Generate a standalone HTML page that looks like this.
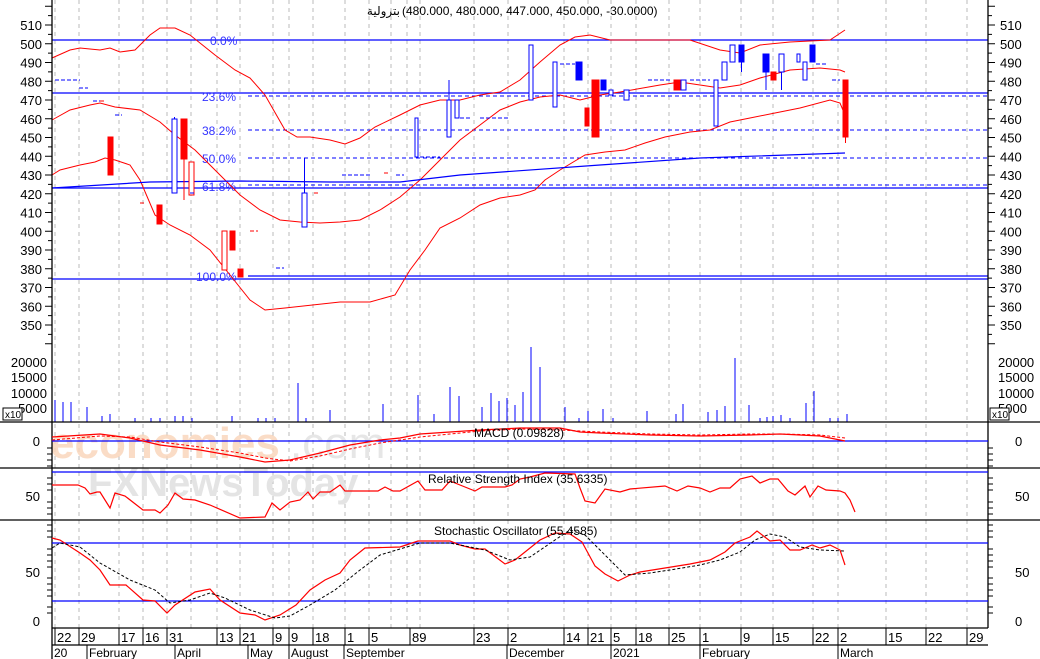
<!DOCTYPE html>
<html><head><meta charset="utf-8"><style>
html,body{margin:0;padding:0;background:#fff;width:1040px;height:659px;overflow:hidden}
svg{display:block;font-family:"Liberation Sans",sans-serif}
</style></head><body>
<svg id="s" width="1040" height="659" viewBox="0 0 1040 659" xmlns="http://www.w3.org/2000/svg">
<rect width="1040" height="659" fill="#fff"/>
<g id="grid" stroke="#bbb" stroke-dasharray="4,4" stroke-width="1"></g>
<!-- watermark -->
<text x="50" y="458" font-size="44" font-weight="bold" fill="#fad4b8" opacity="0.8">economies</text>
<text x="290" y="458" font-size="44" fill="#e6e6e6">.com</text>
<text x="88" y="496" font-size="40" font-weight="bold" fill="#e4e4e4">FXNewsToday</text>
<!-- fib lines -->
<g stroke="#0000ff" stroke-width="1.2" fill="none">
<line x1="52" y1="40" x2="988" y2="40"/>
<line x1="52" y1="93" x2="988" y2="93"/>
<line x1="52" y1="188" x2="988" y2="188"/>
<line x1="52" y1="279" x2="988" y2="279"/>
<line x1="248" y1="276" x2="988" y2="276"/>
</g>
<g stroke="#0000ff" stroke-width="1" stroke-dasharray="4,3" fill="none">
<line x1="248" y1="96" x2="988" y2="96"/>
<line x1="248" y1="130" x2="988" y2="130"/>
<line x1="248" y1="158" x2="988" y2="158"/>
<line x1="248" y1="185" x2="988" y2="185"/>
</g>
<g fill="#3333ff" font-size="12">
<text x="210" y="45">0.0%</text><text x="202" y="101">23.6%</text><text x="202" y="135">38.2%</text>
<text x="202" y="163">50.0%</text><text x="202" y="191">61.8%</text><text x="196" y="281">100.0%</text>
</g>
<!-- bands -->
<g stroke="#ff0000" stroke-width="1" fill="none">
<polyline points="52,58 70,50 80,48 100,50 110,48 120,52 135,50 150,35 160,28 175,28 190,35 215,55 235,70 250,78 265,95 285,130 297,137 310,137 330,140 345,144 360,138 375,127 400,115 420,105 440,100 460,100 480,95 500,92 520,80 540,62 560,45 575,37 590,35 610,40 630,40 690,40 720,50 740,53 760,45 790,42 830,40 845,30"/>
<polyline points="52,120 70,110 90,105 100,103 115,107 140,110 160,122 175,135 195,150 215,170 240,195 260,210 280,220 300,222 320,223 340,222 360,220 380,210 400,197 420,180 440,160 460,140 480,125 500,110 520,102 540,97 560,95 580,100 600,95 620,92 660,85 680,82 700,85 720,88 740,85 760,78 790,70 820,68 840,70 845,72"/>
<polyline points="52,175 60,170 80,165 95,162 105,158 115,160 130,165 140,180 155,215 170,225 190,235 210,250 230,275 250,300 265,310 285,308 340,302 370,302 395,295 410,270 425,250 440,228 460,218 480,205 500,198 520,195 535,190 545,180 560,170 585,155 605,152 625,150 645,143 665,137 690,132 710,130 730,122 750,118 775,113 800,108 830,100 840,103 845,115"/>
</g>
<polyline fill="none" stroke="#0000ff" stroke-width="1.2" points="52,188 150,182 240,181 330,182 400,182 460,175 600,165 700,158 845,153"/>
<g id="c"></g>
<g id="v" stroke="#0000ff" stroke-width="1"></g>
<g stroke="#000" stroke-width="1.3">
<line x1="0" y1="422" x2="1040" y2="422"/>
<line x1="0" y1="468" x2="1040" y2="468"/>
<line x1="0" y1="520" x2="1040" y2="520"/>
<line x1="52" y1="628" x2="988" y2="628"/>
<line x1="52" y1="645" x2="988" y2="645"/>
<line x1="52" y1="0" x2="52" y2="659"/>
<line x1="988" y1="0" x2="988" y2="628"/>
</g>
<g stroke="#0000ff" stroke-width="1.2">
<line x1="52" y1="441" x2="988" y2="441"/>
<line x1="52" y1="472" x2="988" y2="472"/>
<line x1="52" y1="543" x2="988" y2="543"/>
<line x1="52" y1="601" x2="988" y2="601"/>
</g>
<polyline fill="none" stroke="#f00" stroke-width="1.2" points="52,437 100,434 130,438 160,445 200,450 240,457 265,462 290,460 320,453 350,445 380,440 400,438 420,434 450,432 480,430 520,428 560,428 580,432 600,433 650,435 700,436 750,435 780,434 820,436 845,441"/>
<polyline fill="none" stroke="#f00" stroke-width="1" stroke-dasharray="3,2" points="52,440 100,436 130,437 160,442 200,447 240,453 265,458 290,461 320,456 350,449 380,443 400,440 420,437 450,434 480,431 520,429 560,430 580,431 600,432 650,434 700,435 750,434 780,434 820,435 845,438"/>
<text x="474" y="437" font-size="12">MACD (0.09828)</text>
<polyline fill="none" stroke="#f00" stroke-width="1.2" points="52,485 78,485 85,488 90,494 97,492 100,492 110,508 115,493 125,496 143,510 155,510 160,513 168,505 175,493 183,499 195,500 210,505 240,518 265,517 272,503 280,510 290,502 300,500 308,492 313,499 320,492 330,492 340,485 345,491 378,491 385,487 393,491 400,491 418,481 425,490 442,490 450,481 460,485 475,491 482,487 505,487 512,485 520,479 530,477 545,473 575,474 580,488 585,501 595,503 605,489 620,492 630,489 665,486 677,491 688,486 700,488 710,492 720,488 730,488 740,479 752,476 760,483 770,479 778,479 788,491 795,495 805,486 810,497 818,486 826,490 840,491 845,493 850,500 855,512"/>
<text x="428" y="483" font-size="12">Relative Strength Index (35.6335)</text>
<polyline fill="none" stroke="#f00" stroke-width="1.2" points="52,538 60,540 80,553 90,560 100,570 110,585 126,585 143,600 155,601 167,613 175,605 195,592 210,589 220,600 240,613 255,615 265,620 280,615 296,605 310,590 325,580 340,573 350,560 365,548 400,547 418,541 450,541 460,545 475,549 485,549 505,564 515,560 525,552 540,540 555,533 570,534 582,542 595,566 605,574 618,581 630,575 640,572 665,568 690,564 710,560 725,552 735,543 750,537 757,531 770,541 780,540 790,550 800,550 812,545 820,548 830,545 840,550 845,565"/>
<polyline fill="none" stroke="#000" stroke-width="1" stroke-dasharray="3,2" points="52,548 60,543 80,547 100,563 130,580 155,590 170,603 190,600 210,593 225,598 250,610 275,618 290,616 310,605 335,590 360,570 380,555 400,549 420,543 450,543 475,548 485,550 510,560 530,557 555,540 570,530 585,535 610,560 625,575 650,573 670,570 700,565 720,560 740,552 755,540 770,534 785,537 800,547 820,550 845,551"/>
<text x="434" y="535" font-size="12">Stochastic Oscillator (55.4585)</text>
<text x="400" y="15" font-size="12" text-anchor="end" font-family="DejaVu Sans, sans-serif" font-size="11">بترولية</text>
<text x="402" y="15" font-size="12">(480.000, 480.000, 447.000, 450.000, -30.0000)</text>
<g id="ax" font-size="13" fill="#000"></g>
<rect x="3" y="408" width="19" height="12" fill="#fff" stroke="#000"/><text x="5" y="418" font-size="10">x10</text>
<rect x="990" y="408" width="19" height="12" fill="#fff" stroke="#000"/><text x="992" y="418" font-size="10">x10</text>
</svg>
<script>
var NS="http://www.w3.org/2000/svg";
function el(p,t,a,txt){var e=document.createElementNS(NS,t);for(var k in a)e.setAttribute(k,a[k]);if(txt!=null)e.textContent=txt;document.getElementById(p).appendChild(e);return e}
var gx=[55,79,119,143,167,191,217,240,273,289,313,345,369,391,407,420,474,508,564,588,611,636,669,700,741,773,813,838,886,926,967];
gx.forEach(function(x){el('grid','line',{x1:x,y1:0,x2:x,y2:628})});
var C=[[108,113,137,175,'#f00',1],[157,162,205,224,'#f00',1],[172,177,119,193,'#00f',0,117,193],[181,187,119,159,'#f00',1,119,200],[189,194,162,195,'#f00',0],[222,227,231,270,'#f00',0],[230,235,231,250,'#f00',1],[238,243,269,277,'#f00',1],[302,307,193,227,'#00f',0,158,227],
[415,418,118,157,'#00f',0],[447,451,100,137,'#00f',0,80,137],[455,459,100,118,'#00f',0],[529,533,45,100,'#00f',0],[553,557,62,107,'#00f',0],[576,582,62,80,'#00f',1],[585,589,108,126,'#f00',1],[592,599,80,137,'#f00',1,80,137],[601,606,80,90,'#00f',1],[609,613,90,95,'#00f',0],[624,629,90,100,'#00f',0],[674,680,80,90,'#f00',1],[681,686,80,90,'#00f',0],[714,718,80,126,'#00f',0],[722,727,62,80,'#00f',0],[730,735,45,62,'#00f',0],[739,744,45,62,'#00f',1,45,72],[763,769,54,72,'#00f',1,54,90],[771,776,72,80,'#f00',1],[779,784,54,72,'#00f',0,54,90],[797,800,54,62,'#00f',0],[803,807,62,80,'#00f',0],[810,815,45,62,'#00f',1],[843,848,80,137,'#f00',1,80,143]];
C.forEach(function(c){var xm=(c[0]+c[1])/2;if(c[6]!=null)el('c','line',{x1:xm,y1:c[6],x2:xm,y2:c[7],stroke:c[4]});
el('c','rect',{x:c[0],y:c[2],width:c[1]-c[0],height:c[3]-c[2],fill:c[5]?c[4]:'#fff',stroke:c[4]})});
var D=[[55,80,6],[79,88,6],[93,100,5],[100,106,3],[115,122,3],[140,146,3],[190,196,3],[250,258,3],[276,284,3],[314,320,3],[342,372,3],[384,388,3],[396,404,3],[420,440,3],[460,470,3],[480,510,3],[560,575,3],[648,672,3],[690,710,3],[816,826,3],[832,840,3]];
var Dy=[80,88,101,101,115,203,193,231,268,193,175,173,175,157,118,118,64,80,80,64,80];
D.forEach(function(d,i){el('c','line',{x1:d[0],y1:Dy[i],x2:d[1],y2:Dy[i],stroke:i<2||i>12?'#00f':(i%2?'#f00':'#00f'),'stroke-dasharray':'4,2'})});
var V=[[55,400],[63,402],[71,402],[87,407],[102,416],[110,414],[135,418],[151,418],[160,418],[175,416],[183,416],[192,418],[232,416],[258,418],[266,418],[275,418],[298,383],[306,418],[330,410],[383,404],[418,395],[434,414],[450,387],[459,396],[482,407],[491,393],[499,401],[507,398],[515,405],[523,392],[531,347],[540,367],[565,407],[579,418],[588,411],[603,409],[613,418],[647,411],[676,414],[683,404],[708,412],[717,410],[725,406],[735,358],[749,405],[760,418],[767,417],[773,416],[781,415],[790,418],[806,403],[814,391],[830,418],[838,418],[847,414]];
V.forEach(function(v){el('v','line',{x1:v[0],y1:v[1],x2:v[0],y2:422})});
for(var p=350;p<=510;p+=10){var y=25+(510-p)*1.875;el('ax','text',{x:42,y:y+5,'text-anchor':'end'},p);el('ax','text',{x:1000,y:y+5},p)}
for(var p=340;p<=520;p+=5){var y=25+(510-p)*1.875;var w=p%10?4:7;el('ax','line',{x1:52-w,y1:y,x2:52,y2:y,stroke:'#000'});el('ax','line',{x1:988,y1:y,x2:988+w,y2:y,stroke:'#000'})}
[[20000,362],[15000,377],[10000,393],[5000,408]].forEach(function(a){el('ax','text',{x:47,y:a[1]+5,'text-anchor':'end'},a[0]);el('ax','text',{x:998,y:a[1]+5},a[0])});
[['0',441],['50',496],['50',572],['0',621]].forEach(function(a){el('ax','text',{x:40,y:a[1]+5,'text-anchor':'end'},a[0]);el('ax','text',{x:1015,y:a[1]+5},a[0])});
[448,454,460,466,478,484,490,502,508,514,525,531,537,549,555,561,567,578,584,590,596,607,613].forEach(function(y){el('ax','line',{x1:47,y1:y,x2:52,y2:y,stroke:'#000'});el('ax','line',{x1:988,y1:y,x2:993,y2:y,stroke:'#000'})});
var L=[[55,'22'],[79,'29'],[119,'17'],[143,'16'],[167,'31'],[217,'13'],[240,'21'],[273,'9'],[289,'9'],[313,'18'],[345,'1'],[369,'5'],[410,'89'],[474,'23'],[508,'2'],[564,'14'],[588,'21'],[611,'5'],[636,'18'],[669,'25'],[700,'1'],[741,'9'],[773,'15'],[813,'22'],[838,'2'],[886,'15'],[926,'22'],[967,'29']];
L.forEach(function(l){el('ax','line',{x1:l[0],y1:628,x2:l[0],y2:645,stroke:'#000'});el('ax','text',{x:l[0]+2,y:642},l[1])});
[[52,'20'],[87,'February'],[175,'April'],[248,'May'],[289,'August'],[344,'September'],[507,'December'],[611,'2021'],[700,'February'],[838,'March']].forEach(function(m){el('ax','line',{x1:m[0],y1:645,x2:m[0],y2:659,stroke:'#000'});el('ax','text',{x:m[0]+2,y:657,'font-size':12},m[1])});
</script>
</body></html>
